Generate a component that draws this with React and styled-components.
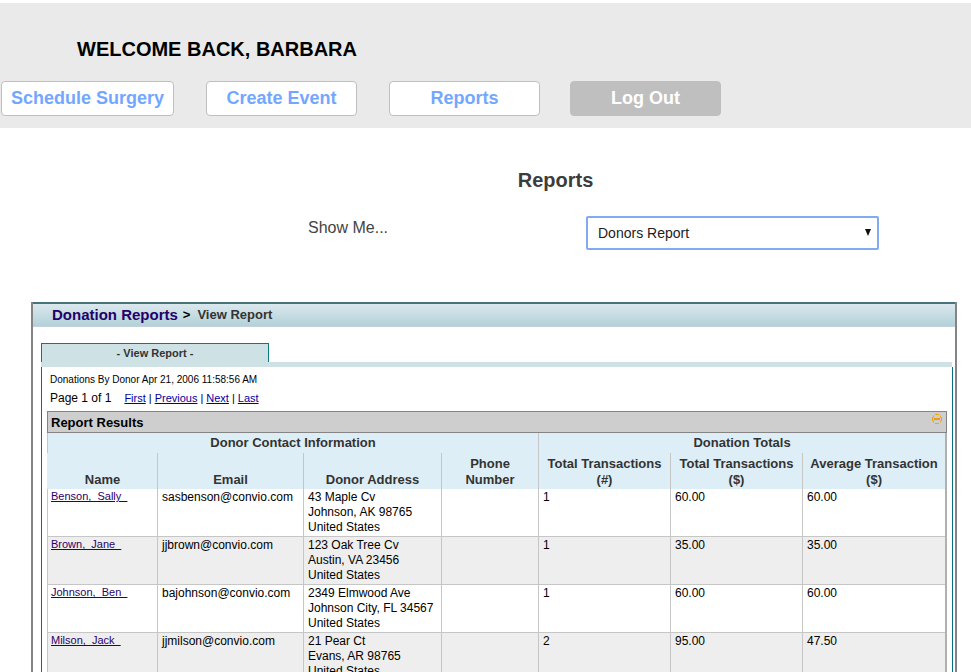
import React from "react";
import styled, { createGlobalStyle } from "styled-components";

const GlobalStyle = createGlobalStyle`
  * { box-sizing: border-box; }
  html { scrollbar-width: none; }
  body {
    margin: 0;
    background: #fff;
    color: #000;
    font-family: "Liberation Sans", Arial, sans-serif;
  }
`;

const Banner = styled.header`
  margin-top: 3px;
  padding: 34px 0 12px 1px;
  background: #eaeaea;
`;

const Welcome = styled.h1`
  margin: 0 0 20px;
  padding-left: 76px;
  font-size: 20px;
  line-height: 24px;
  text-transform: uppercase;
`;

const Nav = styled.nav`
  display: flex;
  gap: 30px;
`;

const NavGroup = styled.div`
  display: flex;
  gap: 32px;
`;

const NavButton = styled.button`
  min-width: 151px;
  height: 35px;
  padding: 0 9px 2px;
  border: 1px solid #bfbfbf;
  border-radius: 4px;
  background: ${(p) => (p.$muted ? "#bfbfbf" : "#fff")};
  color: ${(p) => (p.$muted ? "#fff" : "#73a7ff")};
  font-family: inherit;
  font-size: 18px;
  font-weight: bold;
  line-height: 24px;
  white-space: nowrap;
`;

const Filter = styled.section`
  padding: 40px 92px 52px 140px;
`;

const Title = styled.h2`
  margin: 0 -92px 24px 0;
  color: #3c3c3c;
  font-size: 20px;
  line-height: 24px;
  text-align: center;
`;

const FilterRow = styled.div`
  display: grid;
  grid-template-columns: 278px 1fr;
  padding-left: 168px;
`;

const FilterLabel = styled.label`
  color: #444;
  font-size: 16px;
  line-height: 24px;
`;

const SelectBox = styled.div`
  position: relative;
`;

const Select = styled.select`
  width: 100%;
  height: 34px;
  padding: 0 28px 0 10px;
  border: 2px solid #82aaf0;
  border-radius: 2px;
  appearance: none;
  background: #fff;
  color: #222;
  font-family: inherit;
  font-size: 14px;
  outline: none;
`;

const Caret = styled.svg`
  position: absolute;
  top: 13px;
  right: 7px;
  pointer-events: none;
`;

const Panel = styled.main`
  margin: 0 14px 0 31px;
  border: 2px solid #848484;
  border-top: 0;
`;

const Crumbs = styled.nav`
  display: flex;
  align-items: center;
  gap: 5px;
  height: 25px;
  padding: 0 0 2px 19px;
  border-top: 2px solid #47747c;
  border-bottom: 1px solid #c5d2d8;
  background: linear-gradient(#dbe8ed, #b2d1da);
  font-size: 13px;
  font-weight: bold;
  color: #333;
`;

const CrumbLink = styled.a`
  color: #24006b;
  font-size: 15px;
  text-decoration: none;
`;

const Chevron = styled.span`
  margin-right: 2px;
  color: #000;
`;

const Tabs = styled.div`
  display: flex;
  padding: 16px 8px 0;
`;

const Tab = styled.button`
  width: 228px;
  height: 19px;
  padding: 0;
  border: 1px solid #087a80;
  border-bottom: 0;
  background: #cee2e6;
  color: #333;
  font-family: inherit;
  font-size: 11px;
  font-weight: bold;
`;

const Report = styled.section`
  margin: 0 2px 8px 8px;
  padding: 6px 5px 8px;
  border: 1px solid #086f83;
  border-top: 0;
`;

const TabRule = styled.div`
  height: 5px;
  margin: 0 3px 0 8px;
  background: #cee2e6;
`;

const Stamp = styled.p`
  margin: 0;
  padding-left: 3px;
  font-size: 10px;
  line-height: 14px;
`;

const Pager = styled.div`
  display: flex;
  align-items: center;
  height: 20px;
  margin-top: 1px;
  margin-bottom: 3px;
  padding-left: 3px;
  font-size: 12px;
`;

const PagerLinks = styled.nav`
  display: flex;
  gap: 3px;
  margin-left: 13px;
  font-size: 11px;

  a { color: #0000a0; }
`;

const ResultsBar = styled.div`
  display: flex;
  justify-content: space-between;
  height: 22px;
  padding: 2px 4px 0 3px;
  border: 1px solid #848484;
  background: #cecece;
`;

const ResultsTitle = styled.h3`
  margin: 0;
  font-size: 13px;
  line-height: 18px;
`;

const Collapse = styled.button`
  width: 10px;
  height: 10px;
  padding: 0;
  border: 0;
  background: none;

  svg { display: block; }
`;

const Table = styled.table`
  width: 100%;
  border-collapse: separate;
  border-spacing: 0;
  table-layout: fixed;
  border-right: 2px solid #b0b0b0;
`;

const GroupHead = styled.th`
  height: 20px;
  padding: 2px 0;
  border-left: 1px solid #c6c6c6;
  background: #deeef6;
  color: #333;
  font-size: 13px;
  line-height: 16px;
`;

const ColumnHead = styled.th`
  height: 36px;
  padding: 3px 0 1px;
  border-left: 1px solid ${(p) => (p.$first ? "#deeef6" : "#c6c6c6")};
  background: #deeef6;
  color: #333;
  font-size: 13px;
  line-height: 16px;
  vertical-align: bottom;
`;

const Row = styled.tr`
  height: 48px;
  background: ${(p) => (p.$shaded ? "#eee" : "#fff")};
`;

const Cell = styled.td`
  padding: 1px 0 1px 4px;
  border-left: 1px solid #c6c6c6;
  border-bottom: 1px solid #c6c6c6;
  font-size: 12px;
  line-height: 15px;
  vertical-align: top;
  white-space: nowrap;
`;

const NameCell = styled(Cell)`
  padding: 0 0 0 3px;
`;

const DonorLink = styled.a`
  color: #2c0068;
  font-size: 11px;
  white-space: pre;
`;

const COLUMN_WIDTHS = [110, 146, 138, 97, 132, 132, 143];

const COLUMNS = [
  ["Name"],
  ["Email"],
  ["Donor Address"],
  ["Phone", "Number"],
  ["Total Transactions", "(#)"],
  ["Total Transactions", "($)"],
  ["Average Transaction", "($)"],
];

const DONORS = [
  { name: "Benson,  Sally  ", email: "sasbenson@convio.com", address: ["43 Maple Cv", "Johnson, AK 98765", "United States"], count: 1, total: "60.00", average: "60.00" },
  { name: "Brown,  Jane  ", email: "jjbrown@convio.com", address: ["123 Oak Tree Cv", "Austin, VA 23456", "United States"], count: 1, total: "35.00", average: "35.00" },
  { name: "Johnson,  Ben  ", email: "bajohnson@convio.com", address: ["2349 Elmwood Ave", "Johnson City, FL 34567", "United States"], count: 1, total: "60.00", average: "60.00" },
  { name: "Milson,  Jack  ", email: "jjmilson@convio.com", address: ["21 Pear Ct", "Evans, AR 98765", "United States"], count: 2, total: "95.00", average: "47.50" },
];

const PAGES = ["First", "Previous", "Next", "Last"];

export default function App() {
  return (
    <>
      <GlobalStyle />
      <Banner>
        <Welcome>Welcome back, Barbara</Welcome>
        <Nav>
          <NavGroup>
            <NavButton>Schedule Surgery</NavButton>
            <NavButton>Create Event</NavButton>
            <NavButton>Reports</NavButton>
          </NavGroup>
          <NavButton $muted>Log Out</NavButton>
        </Nav>
      </Banner>

      <Filter>
        <Title>Reports</Title>
        <FilterRow>
          <FilterLabel htmlFor="report">Show Me...</FilterLabel>
          <SelectBox>
            <Select id="report" defaultValue="donors">
              <option value="donors">Donors Report</option>
            </Select>
            <Caret width="8" height="7" viewBox="0 0 8 7" aria-hidden="true">
              <path d="M1 0h6L4 7z" fill="#111" />
            </Caret>
          </SelectBox>
        </FilterRow>
      </Filter>

      <Panel>
        <Crumbs>
          <CrumbLink href="#donations">Donation Reports</CrumbLink>
          <Chevron>&gt;</Chevron>
          <span>View Report</span>
        </Crumbs>
        <Tabs>
          <Tab>- View Report -</Tab>
        </Tabs>
        <TabRule />
        <Report>
          <Stamp>Donations By Donor Apr 21, 2006 11:58:56 AM</Stamp>
          <Pager>
            Page 1 of 1
            <PagerLinks>
              {PAGES.map((page, i) => (
                <React.Fragment key={page}>
                  {i > 0 && <span>|</span>}
                  <a href={`#${page.toLowerCase()}`}>{page}</a>
                </React.Fragment>
              ))}
            </PagerLinks>
          </Pager>
          <ResultsBar>
            <ResultsTitle>Report Results</ResultsTitle>
            <Collapse aria-label="Collapse results">
              <svg width="10" height="10" viewBox="0 0 10 10">
                <path
                  d="M3 .5h4M3 9.5h4M1.5 1.5v2M8.5 1.5v2M1.5 6.5v2M8.5 6.5v2M.5 3v4M9.5 3v4"
                  fill="none"
                  stroke="#efa21c"
                />
                <path d="M2 5h6" stroke="#ef9a10" strokeWidth="2" />
              </svg>
            </Collapse>
          </ResultsBar>
          <Table>
            <colgroup>
              {COLUMN_WIDTHS.map((width, i) => (
                <col key={i} width={width} />
              ))}
            </colgroup>
            <thead>
              <tr>
                <GroupHead colSpan={4}>Donor Contact Information</GroupHead>
                <GroupHead colSpan={3}>Donation Totals</GroupHead>
              </tr>
              <tr>
                {COLUMNS.map((lines, i) => (
                  <ColumnHead key={i} $first={i === 0}>
                    {lines.map((line) => (
                      <div key={line}>{line}</div>
                    ))}
                  </ColumnHead>
                ))}
              </tr>
            </thead>
            <tbody>
              {DONORS.map((donor, i) => (
                <Row key={donor.email} $shaded={i % 2 === 1}>
                  <NameCell><DonorLink href="#donor">{donor.name}</DonorLink></NameCell>
                  <Cell>{donor.email}</Cell>
                  <Cell>
                    {donor.address.map((line) => (
                      <div key={line}>{line}</div>
                    ))}
                  </Cell>
                  <Cell />
                  <Cell>{donor.count}</Cell>
                  <Cell>{donor.total}</Cell>
                  <Cell>{donor.average}</Cell>
                </Row>
              ))}
            </tbody>
          </Table>
        </Report>
      </Panel>
    </>
  );
}
